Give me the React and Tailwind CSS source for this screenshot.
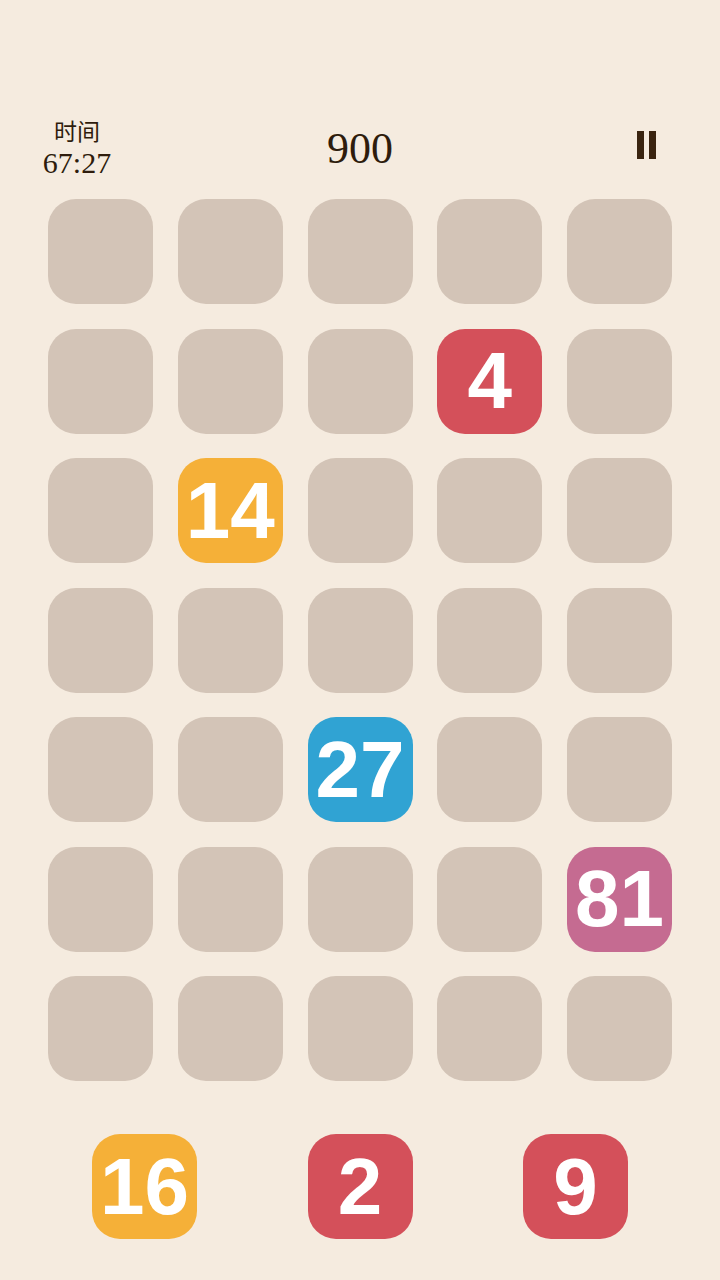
import React from 'react';

const COLORS = {
  red: 'bg-[#d4505a]',
  orange: 'bg-[#f5b038]',
  blue: 'bg-[#30a3d3]',
  pink: 'bg-[#c56b91]',
};

// board 7 rows x 5 cols, null = empty cell
const board = [
  [null, null, null, null, null],
  [null, null, null, { n: 4, c: 'red' }, null],
  [null, { n: 14, c: 'orange' }, null, null, null],
  [null, null, null, null, null],
  [null, null, { n: 27, c: 'blue' }, null, null],
  [null, null, null, null, { n: 81, c: 'pink' }],
  [null, null, null, null, null],
];

const next = [
  { n: 16, c: 'orange' },
  { n: 2, c: 'red' },
  { n: 9, c: 'red' },
];

function Tile({ cell }) {
  if (!cell) return <div className="w-[105px] h-[105px] rounded-[28px] bg-[#d3c4b7]" />;
  return (
    <div
      className={`w-[105px] h-[105px] rounded-[28px] ${COLORS[cell.c]} flex items-center justify-center text-white font-bold text-[80px] leading-none`}
      style={{ fontFamily: '"Liberation Sans", Arial, sans-serif' }}
    >
      {cell.n}
    </div>
  );
}

export default function App() {
  return (
    <div className="w-[720px] h-[1280px] bg-[#f5ebdf] flex flex-col text-[#2e1c0c]" style={{ fontFamily: '"Liberation Serif", "Noto Sans CJK SC", serif' }}>
      <div className="h-[117px]" />
      <div className="h-[67px] flex items-start px-[40px]">
        <div className="w-[74px] flex flex-col items-center">
          <span className="text-[23px] leading-[27px]" style={{ fontFamily: '"Noto Sans CJK SC", sans-serif' }}>时间</span>
          <span className="text-[30px] leading-[30px] mt-[4px]">67:27</span>
        </div>
        <div className="flex-1 text-center text-[44px] leading-none pt-[10px]">900</div>
        <div className="w-[74px] flex justify-end pr-[24px] pt-[14px]">
          <div className="flex gap-[5px]">
            <div className="w-[7px] h-[28px] bg-[#3a2410]" />
            <div className="w-[7px] h-[28px] bg-[#3a2410]" />
          </div>
        </div>
      </div>
      <div className="mt-[15px] mx-[48px] flex flex-col gap-y-[24.5px]">
        {board.map((row, i) => (
          <div key={i} className="flex justify-between">
            {row.map((cell, j) => (
              <Tile key={j} cell={cell} />
            ))}
          </div>
        ))}
      </div>
      <div className="mt-[53px] flex justify-center gap-[110.5px]">
        {next.map((cell, i) => (
          <Tile key={i} cell={cell} />
        ))}
      </div>
    </div>
  );
}
